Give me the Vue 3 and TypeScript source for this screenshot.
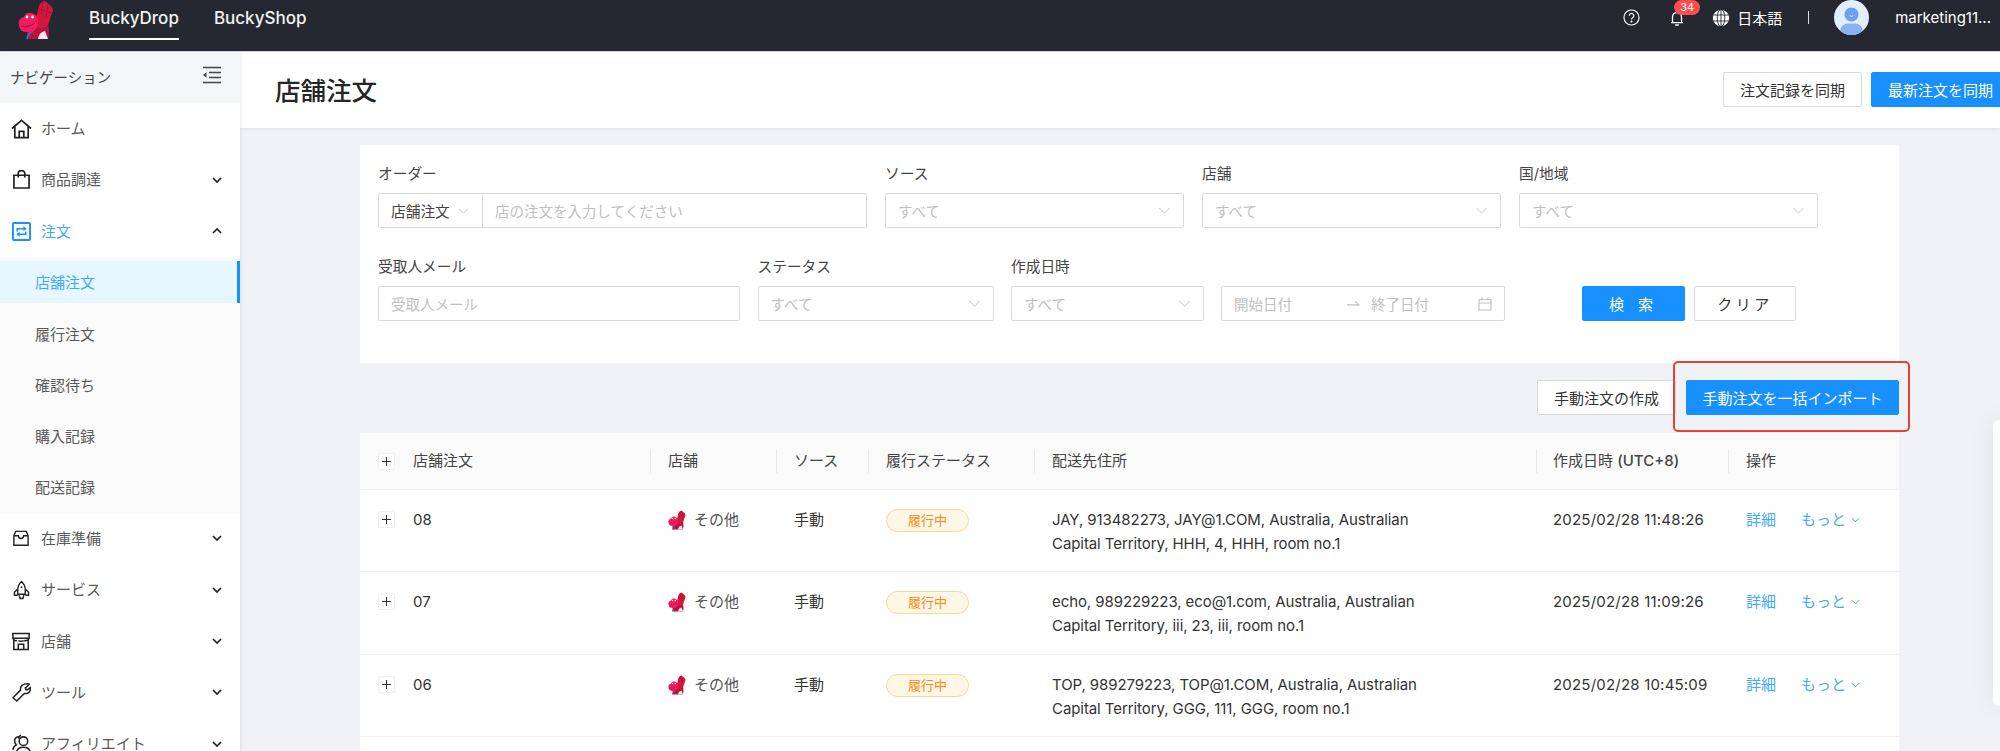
<script setup lang="ts">
const navTop = [
  { icon: 'home', label: 'ホーム', chevron: '' },
  { icon: 'bag', label: '商品調達', chevron: 'down' },
  { icon: 'swap', label: '注文', chevron: 'up', active: true },
]
const subItems = [
  { label: '店舗注文', active: true },
  { label: '履行注文' },
  { label: '確認待ち' },
  { label: '購入記録' },
  { label: '配送記録' },
]
const navBottom = [
  { icon: 'inbox', label: '在庫準備', chevron: 'down' },
  { icon: 'rocket', label: 'サービス', chevron: 'down' },
  { icon: 'shop', label: '店舗', chevron: 'down' },
  { icon: 'tool', label: 'ツール', chevron: 'down' },
  { icon: 'users', label: 'アフィリエイト', chevron: 'down' },
]
const selectsRow1 = [
  { label: 'ソース' },
  { label: '店舗' },
  { label: '国/地域' },
]
const columns = [
  { label: '店舗' },
  { label: 'ソース' },
  { label: '履行ステータス' },
  { label: '配送先住所' },
]
const rows = [
  { id: '08', line1: 'JAY, 913482273, JAY@1.COM, Australia, Australian', line2: 'Capital Territory, HHH, 4, HHH, room no.1', date: '2025/02/28 11:48:26' },
  { id: '07', line1: 'echo, 989229223, eco@1.com, Australia, Australian', line2: 'Capital Territory, iii, 23, iii, room no.1', date: '2025/02/28 11:09:26' },
  { id: '06', line1: 'TOP, 989279223, TOP@1.COM, Australia, Australian', line2: 'Capital Territory, GGG, 111, GGG, room no.1', date: '2025/02/28 10:45:09' },
]
</script>

<template>
  <div class="app">
    <svg class="defs" width="0" height="0" aria-hidden="true">
      <symbol id="dino" viewBox="0 0 36 40">
        <path d="M9 30Q12 24 22 20L30 23Q32 33 30 39H9Z" fill="#b8123c" />
        <path d="M20 39Q21 32 27 31L30 39Z" fill="#f4e6ea" />
        <path d="M9 39Q10 33 15 31" fill="none" stroke="#2f74d8" stroke-width="1.6" />
        <path d="M17 22L21 6Q23 1 27 1L34 7Q36 10 34 13L30 25Q24 30 19 27Z" fill="#d5173f" />
        <path d="M21 9L33 13M25 2L23 14M30 4L28 17" fill="none" stroke="#a90f33" stroke-width="1" />
        <path d="M.5 23Q1 18 6 17Q8 12 13 13Q19 14 20 20Q21 29 14 32Q5 33 2 29Z" fill="#f01c60" />
        <circle cx="9" cy="17" r="1.4" fill="#fff" />
        <circle cx="14.500" cy="17" r="1.4" fill="#fff" />
        <path d="M3 26Q10 28 17 23" fill="none" stroke="#a80e3a" stroke-width="1" />
      </symbol>
    </svg>

    <header class="topbar">
      <svg class="logo"><use href="#dino" /></svg>
      <nav class="product-tabs">
        <span class="product-tab active">BuckyDrop</span>
        <span class="product-tab">BuckyShop</span>
      </nav>
      <div class="top-right">
        <svg class="help" viewBox="0 0 18 18" fill="none" stroke="#fff" stroke-width="1.2">
          <circle cx="9" cy="9" r="8" />
          <path d="M6.6 7.1a2.4 2.4 0 1 1 3.6 2.1c-.8.5-1.2 1-1.2 1.9" />
          <circle cx="9" cy="13.2" r=".5" fill="#fff" />
        </svg>
        <div class="bell-wrap">
          <svg class="bell" viewBox="0 0 18 18" fill="none" stroke="#fff" stroke-width="1.3">
            <path d="M3 13.6h12M4.5 13.4V8a4.5 4.5 0 0 1 9 0v5.4M7.2 16h3.6" />
          </svg>
          <span class="badge-count">34</span>
        </div>
        <svg class="globe" viewBox="0 0 18 18" fill="#fff" stroke="#252830" stroke-width=".9">
          <circle cx="9" cy="9" r="8.6" />
          <ellipse cx="9" cy="9" rx="3.8" ry="8.6" fill="none" />
          <path d="M9 .4v17.2M1 6h16M1 12h16" fill="none" />
        </svg>
        <span class="lang">日本語</span>
        <span class="pipe"></span>
        <svg class="avatar" viewBox="0 0 35 35">
          <defs>
            <clipPath id="avclip"><circle cx="17.5" cy="17.5" r="17.5" /></clipPath>
          </defs>
          <circle cx="17.5" cy="17.5" r="17.5" fill="#e3eefc" />
          <g clip-path="url(#avclip)">
            <circle cx="17.5" cy="14.5" r="7" fill="#6e9eec" />
            <path d="M15.8 15.6q1.7 1.6 3.4 0" fill="none" stroke="#fff" stroke-width=".8" />
            <rect x="6" y="23.5" width="23" height="16" rx="8" fill="#8ab2f2" />
          </g>
        </svg>
        <span class="user">marketing11...</span>
      </div>
    </header>

    <div class="body">
      <aside class="sidebar">
        <div class="nav-head">
          <span class="nav-head-text">ナビゲーション</span>
          <svg class="collapse" viewBox="0 0 20 18" fill="none" stroke="#444" stroke-width="1.3">
            <path d="M1 1.5h18M7 6.5h12M7 11.5h12M1 16.5h18" />
            <path d="M4.5 6.2v5.6L1 9Z" fill="#444" stroke="none" />
          </svg>
        </div>

        <div v-for="item in navTop" :key="item.label" class="nav-item" :class="{ active: item.active }">
          <span class="nav-icon">
            <svg v-if="item.icon === 'home'" class="ic-home" viewBox="0 0 22 20" fill="none" stroke="#222" stroke-width="1.8">
              <path d="M1 9.5 11 1l10 8.5M4 7.5V19h14V7.5M8.6 19v-6.4h4.8V19" />
            </svg>
            <svg v-else-if="item.icon === 'bag'" class="ic-bag" viewBox="0 0 18 20" fill="none" stroke="#222" stroke-width="1.8">
              <path d="M1 5.5h16V19H1ZM5.5 8V3.5a3.5 3 0 0 1 7 0V8" />
            </svg>
            <svg v-else class="ic-swap" viewBox="0 0 20 20" fill="none" stroke="#1890ff" stroke-width="1.6">
              <rect x="1" y="1" width="18" height="18" rx="1" stroke-width="2" />
              <path d="M5.5 10V7h7M14.500 10v3h-7" />
              <path d="M12 4.200 15.500 7 12 9.800ZM8 10.200 4.500 13 8 15.800Z" fill="#1890ff" stroke="none" />
            </svg>
          </span>
          <span class="nav-label">{{ item.label }}</span>
          <svg v-if="item.chevron" class="chev" viewBox="0 0 10 6" fill="none" stroke="#222" stroke-width="1.7">
            <path :d="item.chevron === 'down' ? 'M1 1l4 4 4-4' : 'M1 5l4-4 4 4'" />
          </svg>
        </div>

        <div class="submenu">
          <div v-for="s in subItems" :key="s.label" class="sub-item" :class="{ active: s.active }">
            <span class="sub-inner">{{ s.label }}</span>
          </div>
        </div>

        <div v-for="item in navBottom" :key="item.label" class="nav-item">
          <span class="nav-icon">
            <svg v-if="item.icon === 'inbox'" class="ic-inbox" viewBox="0 0 18 18" fill="none" stroke="#222" stroke-width="1.6">
              <path d="M1 6 3 1h12l2 5v10.500H1ZM1 6h5q.5 3 3 3t3-3h5" />
            </svg>
            <svg v-else-if="item.icon === 'rocket'" class="ic-rocket" viewBox="0 0 18 20" fill="none" stroke="#222" stroke-width="1.5">
              <path d="M9 1q4 3.500 4 9v4.500H5V10q0-5.500 4-9ZM5 9l-3.500 3.500V15.500H5M13 9l3.500 3.500V15.500H13M6.500 15.500 7.500 19h3l1-3.500" />
              <circle cx="9" cy="7" r="1" fill="#222" stroke="none" />
            </svg>
            <svg v-else-if="item.icon === 'shop'" class="ic-shop" viewBox="0 0 20 20" fill="none" stroke="#222" stroke-width="1.7">
              <path d="M1 1h18v5.500H1ZM2 6.500V19h16V6.500M1 6.500q1.500 3.500 4.500 2.500M7 9q3 1.500 6 0M13.500 9q3.500 1 5.500-2.500M7 19v-6h6v6" />
            </svg>
            <svg v-else-if="item.icon === 'tool'" class="ic-tool" viewBox="0 0 20 20" fill="none" stroke="#222" stroke-width="1.6" stroke-linejoin="round">
              <path d="M18 1.500 14 5.500v-.5l.5 2h2l3-2.500q.5 4-2.500 6-2 1-4 .5L5 19l-4-3.500 8-8q-.5-3 1.500-5 3-2 7.500-1.500Z" />
            </svg>
            <svg v-else class="ic-users" viewBox="0 0 20 20" fill="none" stroke="#222" stroke-width="1.6">
              <circle cx="12" cy="7" r="4.500" />
              <path d="M4.500 20q.5-6.500 7.500-6.500t7.500 6.500M7.500 4.500Q7 1 9.500 1M5 11.500Q2 9 3 5q1-2.500 4.500-3M1 16q0-3 3-4.500" />
            </svg>
          </span>
          <span class="nav-label">{{ item.label }}</span>
          <svg class="chev" viewBox="0 0 10 6" fill="none" stroke="#222" stroke-width="1.7">
            <path d="M1 1l4 4 4-4" />
          </svg>
        </div>
      </aside>

      <main class="main">
        <div class="page-head">
          <h1 class="title">店舗注文</h1>
          <div class="head-actions">
            <button class="btn">注文記録を同期</button>
            <button class="btn primary sync">最新注文を同期</button>
          </div>
        </div>

        <div class="content">
          <section class="filters">
            <div class="filter-row">
              <div class="field w-order">
                <label>オーダー</label>
                <div class="control order-control">
                  <span class="order-type">店舗注文<svg class="sel-chev small" viewBox="0 0 14 8" fill="none" stroke="#bfbfbf" stroke-width="1.1"><path d="M1 1l6 6 6-6" /></svg></span>
                  <span class="ph order-ph">店の注文を入力してください</span>
                </div>
              </div>
              <div v-for="f in selectsRow1" :key="f.label" class="field w-select">
                <label>{{ f.label }}</label>
                <div class="control select">
                  <span class="ph">すべて</span>
                  <svg class="sel-chev" viewBox="0 0 14 8" fill="none" stroke="#bfbfbf" stroke-width="1.1"><path d="M1 1l6 6 6-6" /></svg>
                </div>
              </div>
            </div>
            <div class="filter-row second">
              <div class="field w-mail">
                <label>受取人メール</label>
                <div class="control"><span class="ph">受取人メール</span></div>
              </div>
              <div class="field w-status">
                <label>ステータス</label>
                <div class="control select">
                  <span class="ph">すべて</span>
                  <svg class="sel-chev" viewBox="0 0 14 8" fill="none" stroke="#bfbfbf" stroke-width="1.1"><path d="M1 1l6 6 6-6" /></svg>
                </div>
              </div>
              <div class="field w-created">
                <label>作成日時</label>
                <div class="control select">
                  <span class="ph">すべて</span>
                  <svg class="sel-chev" viewBox="0 0 14 8" fill="none" stroke="#bfbfbf" stroke-width="1.1"><path d="M1 1l6 6 6-6" /></svg>
                </div>
              </div>
              <div class="field w-range">
                <label class="blank">&nbsp;</label>
                <div class="control range">
                  <span class="ph range-start">開始日付</span>
                  <svg class="arrow" viewBox="0 0 14 8" fill="none" stroke="#bfbfbf" stroke-width="1.2"><path d="M0 5h13L9 1.500" /></svg>
                  <span class="ph range-end">終了日付</span>
                  <svg class="cal" viewBox="0 0 14 14" fill="none" stroke="#bfbfbf" stroke-width="1.1"><path d="M1 2.500h12V13H1ZM1 6h12M4 .5v3M10 .5v3" /></svg>
                </div>
              </div>
              <div class="filter-btns">
                <button class="btn primary w-search">検 索</button>
                <button class="btn w-clear">クリア</button>
              </div>
            </div>
          </section>

          <div class="toolbar">
            <button class="btn manual">手動注文の作成</button>
            <div class="import-wrap">
              <button class="btn primary import">手動注文を一括インポート</button>
              <span class="callout"></span>
            </div>
          </div>

          <section class="table">
            <div class="t-row t-head">
              <div class="cell c-first">
                <span class="plus"><svg viewBox="0 0 9 9" fill="none" stroke="#333" stroke-width="1"><path d="M4.500 0v9M0 4.500h9" /></svg></span>
                <span>店舗注文</span>
              </div>
              <div v-for="c in columns" :key="c.label" class="cell divided">{{ c.label }}</div>
              <div class="cell divided date-head">作成日時 <b class="utc">(UTC+8)</b></div>
              <div class="cell divided">操作</div>
            </div>
            <div v-for="r in rows" :key="r.id" class="t-row t-body">
              <div class="cell c-first">
                <span class="plus"><svg viewBox="0 0 9 9" fill="none" stroke="#333" stroke-width="1"><path d="M4.500 0v9M0 4.500h9" /></svg></span>
                <span>{{ r.id }}</span>
              </div>
              <div class="cell shop-cell">
                <svg class="mini-logo"><use href="#dino" /></svg>
                <span>その他</span>
              </div>
              <div class="cell">手動</div>
              <div class="cell"><span class="status">履行中</span></div>
              <div class="cell addr">{{ r.line1 }}<br />{{ r.line2 }}</div>
              <div class="cell date">{{ r.date }}</div>
              <div class="cell ops">
                <a class="link">詳細</a>
                <a class="link more">もっと<svg class="more-chev" viewBox="0 0 10 6" fill="none" stroke="#2f9bff" stroke-width="1.1"><path d="M1 1l4 4 4-4" /></svg></a>
              </div>
            </div>
            <div class="t-row t-body"></div>
          </section>
        </div>
      </main>
    </div>

    <div class="side-panel"></div>
  </div>
</template>

<style>
html,
body {
  margin: 0;
  background: #f0f2f5;
  overflow: hidden;
}
</style>

<style scoped>
.app {
  position: relative;
  width: 2000px;
  height: 751px;
  overflow: hidden;
  display: flex;
  flex-direction: column;
  background: #f0f2f5;
  font-family: "Inter", "Noto Sans CJK JP", sans-serif;
  font-size: 15px;
  color: #333;
}
.defs {
  position: absolute;
}
.topbar {
  height: 51px;
  flex: none;
  background: #252830;
  border-bottom: 1px solid #d9d9d9;
  display: flex;
  align-items: flex-start;
  color: #fff;
}
.logo {
  width: 36px;
  height: 40px;
  margin-left: 18px;
  flex: none;
}
.product-tabs {
  display: flex;
  gap: 35px;
  margin-left: 35px;
}
.product-tab {
  font-size: 17px;
  font-weight: 500;
  height: 38px;
  line-height: 36px;
  color: #f2f2f2;
}
.product-tab.active {
  border-bottom: 2px solid #fff;
}
.top-right {
  margin-left: auto;
  display: flex;
  align-items: center;
  height: 35px;
  padding-right: 9px;
}
.help {
  width: 17px;
  height: 17px;
}
.bell-wrap {
  position: relative;
  width: 18px;
  height: 18px;
  margin-left: 28px;
}
.bell {
  width: 18px;
  height: 18px;
  display: block;
}
.badge-count {
  position: absolute;
  left: 6px;
  top: -9px;
  width: 26px;
  height: 15px;
  border-radius: 8px;
  background: #ff4d4f;
  font-size: 11px;
  line-height: 15px;
  text-align: center;
  color: #fff;
}
.globe {
  width: 18px;
  height: 18px;
  margin-left: 26px;
}
.lang {
  margin-left: 7px;
  font-size: 15px;
}
.pipe {
  width: 1px;
  height: 13px;
  background: #ddd;
  margin-left: 26px;
}
.avatar {
  width: 35px;
  height: 35px;
  margin-left: 25px;
}
.user {
  margin-left: 26px;
  font-size: 15px;
}
.body {
  flex: 1;
  display: flex;
  min-height: 0;
}
.sidebar {
  width: 240px;
  flex: none;
  background: #fff;
  box-shadow: 1px 0 3px rgba(0, 0, 0, 0.08);
  position: relative;
  z-index: 1;
}
.nav-head {
  height: 51px;
  background: #f4f5f7;
  display: flex;
  align-items: center;
  justify-content: space-between;
  padding: 0 18px 0 10px;
  font-size: 14.500px;
  color: #444;
}
.nav-head-text {
  margin-bottom: 2px;
}
.collapse {
  width: 20px;
  height: 18px;
  margin-top: -6px;
}
.nav-item {
  height: 51.300px;
  display: flex;
  align-items: center;
  padding-left: 10px;
  color: #595959;
}
.nav-item.active {
  color: #40a9ff;
}
.nav-icon {
  width: 22px;
  height: 22px;
  display: flex;
  align-items: center;
  justify-content: center;
  margin-right: 9px;
  flex: none;
}
.ic-home {
  width: 21px;
  height: 20px;
}
.ic-bag {
  width: 17px;
  height: 19px;
}
.ic-swap {
  width: 19px;
  height: 19px;
}
.ic-inbox {
  width: 16px;
  height: 17px;
}
.ic-rocket {
  width: 17px;
  height: 20px;
}
.ic-shop {
  width: 18px;
  height: 19px;
}
.ic-tool {
  width: 19px;
  height: 19px;
}
.ic-users {
  width: 19px;
  height: 20px;
}
.nav-label {
  flex: 1;
  margin-bottom: 2px;
}
.chev {
  width: 10px;
  height: 6px;
  margin-right: 18px;
}
.submenu {
  background: #fafafa;
}
.sub-item {
  height: 51.200px;
  display: flex;
  align-items: center;
  color: #595959;
}
.sub-inner {
  flex: 1;
  height: 42px;
  line-height: 44px;
  padding-left: 35px;
}
.sub-item.active .sub-inner {
  background: #e6f7ff;
  color: #40a9ff;
  border-right: 3px solid #1890ff;
}
.main {
  flex: 1;
  min-width: 0;
  display: flex;
  flex-direction: column;
}
.page-head {
  height: 76px;
  flex: none;
  background: #fff;
  box-shadow: 0 1px 4px rgba(0, 0, 0, 0.08);
  display: flex;
  align-items: center;
  justify-content: space-between;
  padding-left: 35px;
  position: relative;
}
.title {
  margin: -4px 0 0;
  font-size: 25.500px;
  font-weight: 500;
  color: #262626;
}
.head-actions {
  display: flex;
  gap: 9px;
  margin-right: -10px;
  margin-top: -2px;
}
.btn {
  height: 35px;
  box-sizing: border-box;
  padding: 0 16px;
  border: 1px solid #d9d9d9;
  border-radius: 2px;
  background: #fff;
  color: #333;
  font: inherit;
  white-space: nowrap;
  flex: none;
}
.btn.primary {
  background: #1890ff;
  border-color: #1890ff;
  color: #fff;
}
.content {
  padding: 17px 101px 0 120px;
}
.filters {
  height: 218px;
  box-sizing: border-box;
  background: #fff;
  border-radius: 2px;
  padding: 17px 18px;
}
.filter-row {
  display: flex;
  gap: 18px;
}
.filter-row.second {
  margin-top: 27px;
  gap: 17.500px;
}
.field label {
  display: block;
  height: 22px;
  line-height: 24px;
  margin-bottom: 9px;
  font-size: 14.700px;
  color: #444;
}
.w-order { width: 489px; }
.w-select { width: 299px; }
.w-mail { width: 362px; }
.w-status { width: 236px; }
.w-created { width: 192.500px; }
.w-range { width: 284px; }
.control {
  height: 35px;
  box-sizing: border-box;
  border: 1px solid #d9d9d9;
  border-radius: 2px;
  display: flex;
  align-items: center;
  padding: 0 12px;
  background: #fff;
}
.ph {
  color: #bfbfbf;
  font-size: 14.500px;
}
.select {
  justify-content: space-between;
}
.sel-chev {
  width: 13px;
  height: 7px;
  flex: none;
}
.sel-chev.small {
  width: 11px;
  height: 6px;
  margin-left: 8px;
}
.order-control {
  padding: 0;
}
.order-type {
  width: 104px;
  height: 100%;
  box-sizing: border-box;
  padding-left: 12px;
  border-right: 1px solid #d9d9d9;
  display: flex;
  align-items: center;
  color: #444;
  font-size: 14.700px;
}
.order-ph {
  margin-left: 12px;
}
.range-start {
  width: 113px;
}
.arrow {
  width: 13px;
  height: 8px;
}
.range-end {
  margin-left: 11px;
}
.cal {
  width: 14px;
  height: 14px;
  margin-left: auto;
}
.filter-btns {
  display: flex;
  gap: 9px;
  margin-left: 59.500px;
  padding-top: 31px;
}
.w-search {
  width: 103px;
  letter-spacing: 5px;
}
.w-clear {
  width: 102px;
  letter-spacing: 3.500px;
}
.toolbar {
  display: flex;
  justify-content: flex-end;
  gap: 10px;
  margin-top: 17px;
  margin-bottom: 18px;
}
.import-wrap {
  position: relative;
}
.import {
  width: 213px;
  padding: 0;
  display: block;
}
.callout {
  position: absolute;
  left: -13px;
  right: -11px;
  top: -19px;
  bottom: -17px;
  border: 2.500px solid #ea3f33;
  border-radius: 5px;
  pointer-events: none;
}
.table {
  background: #fff;
}
.t-row {
  display: grid;
  grid-template-columns: 290px 126px 92px 166px 502px 192px 171px;
  border-bottom: 1px solid #f0f0f0;
  box-sizing: border-box;
}
.t-head {
  height: 57px;
  background: #fafafa;
  align-items: center;
  color: #444;
}
.t-body {
  height: 82.300px;
  color: #333;
}
.cell {
  padding-left: 18px;
  position: relative;
  line-height: 24px;
  white-space: nowrap;
}
.t-body .cell {
  padding-top: 18px;
}
.divided::before {
  content: "";
  position: absolute;
  left: 0;
  top: 0;
  height: 24px;
  width: 1px;
  background: #e8e8e8;
}
.c-first {
  display: flex;
  align-items: flex-start;
}
.t-head .c-first {
  align-items: center;
}
.plus {
  width: 17px;
  height: 17px;
  box-sizing: border-box;
  border: 1px solid #f0f0f0;
  border-radius: 2px;
  background: #fff;
  margin-right: 18px;
  margin-top: 3px;
  flex: none;
  display: flex;
  align-items: center;
  justify-content: center;
}
.plus svg {
  width: 9px;
  height: 9px;
}
.t-head .plus {
  margin-top: 0;
}
.shop-cell {
  display: flex;
  align-items: flex-start;
  color: #555;
}
.mini-logo {
  width: 18px;
  height: 20px;
  margin-right: 8px;
  margin-top: 2px;
  flex: none;
}
.status {
  display: inline-block;
  width: 83px;
  height: 23px;
  box-sizing: border-box;
  border: 1px solid #ffd591;
  border-radius: 12px;
  background: #fff7e6;
  color: #fa8c16;
  font-size: 13px;
  line-height: 21px;
  text-align: center;
  vertical-align: top;
  margin-top: 1px;
}
.addr {
  letter-spacing: -0.08px;
}
.date {
  padding-left: 17px;
  letter-spacing: 0.2px;
}
.date-head {
  padding-left: 17px;
}
.utc {
  font-weight: 500;
}
.ops {
  display: flex;
  align-items: flex-start;
  gap: 25px;
  color: #40a9ff;
}
.link {
  color: #40a9ff;
}
.more {
  display: flex;
  align-items: center;
}
.more-chev {
  width: 9px;
  height: 6px;
  margin-left: 5px;
}
.side-panel {
  position: absolute;
  left: 1993px;
  top: 420px;
  width: 20px;
  height: 286px;
  background: #fff;
  border-radius: 6px;
  box-shadow: 0 0 24px rgba(0, 0, 0, 0.08);
}
</style>
